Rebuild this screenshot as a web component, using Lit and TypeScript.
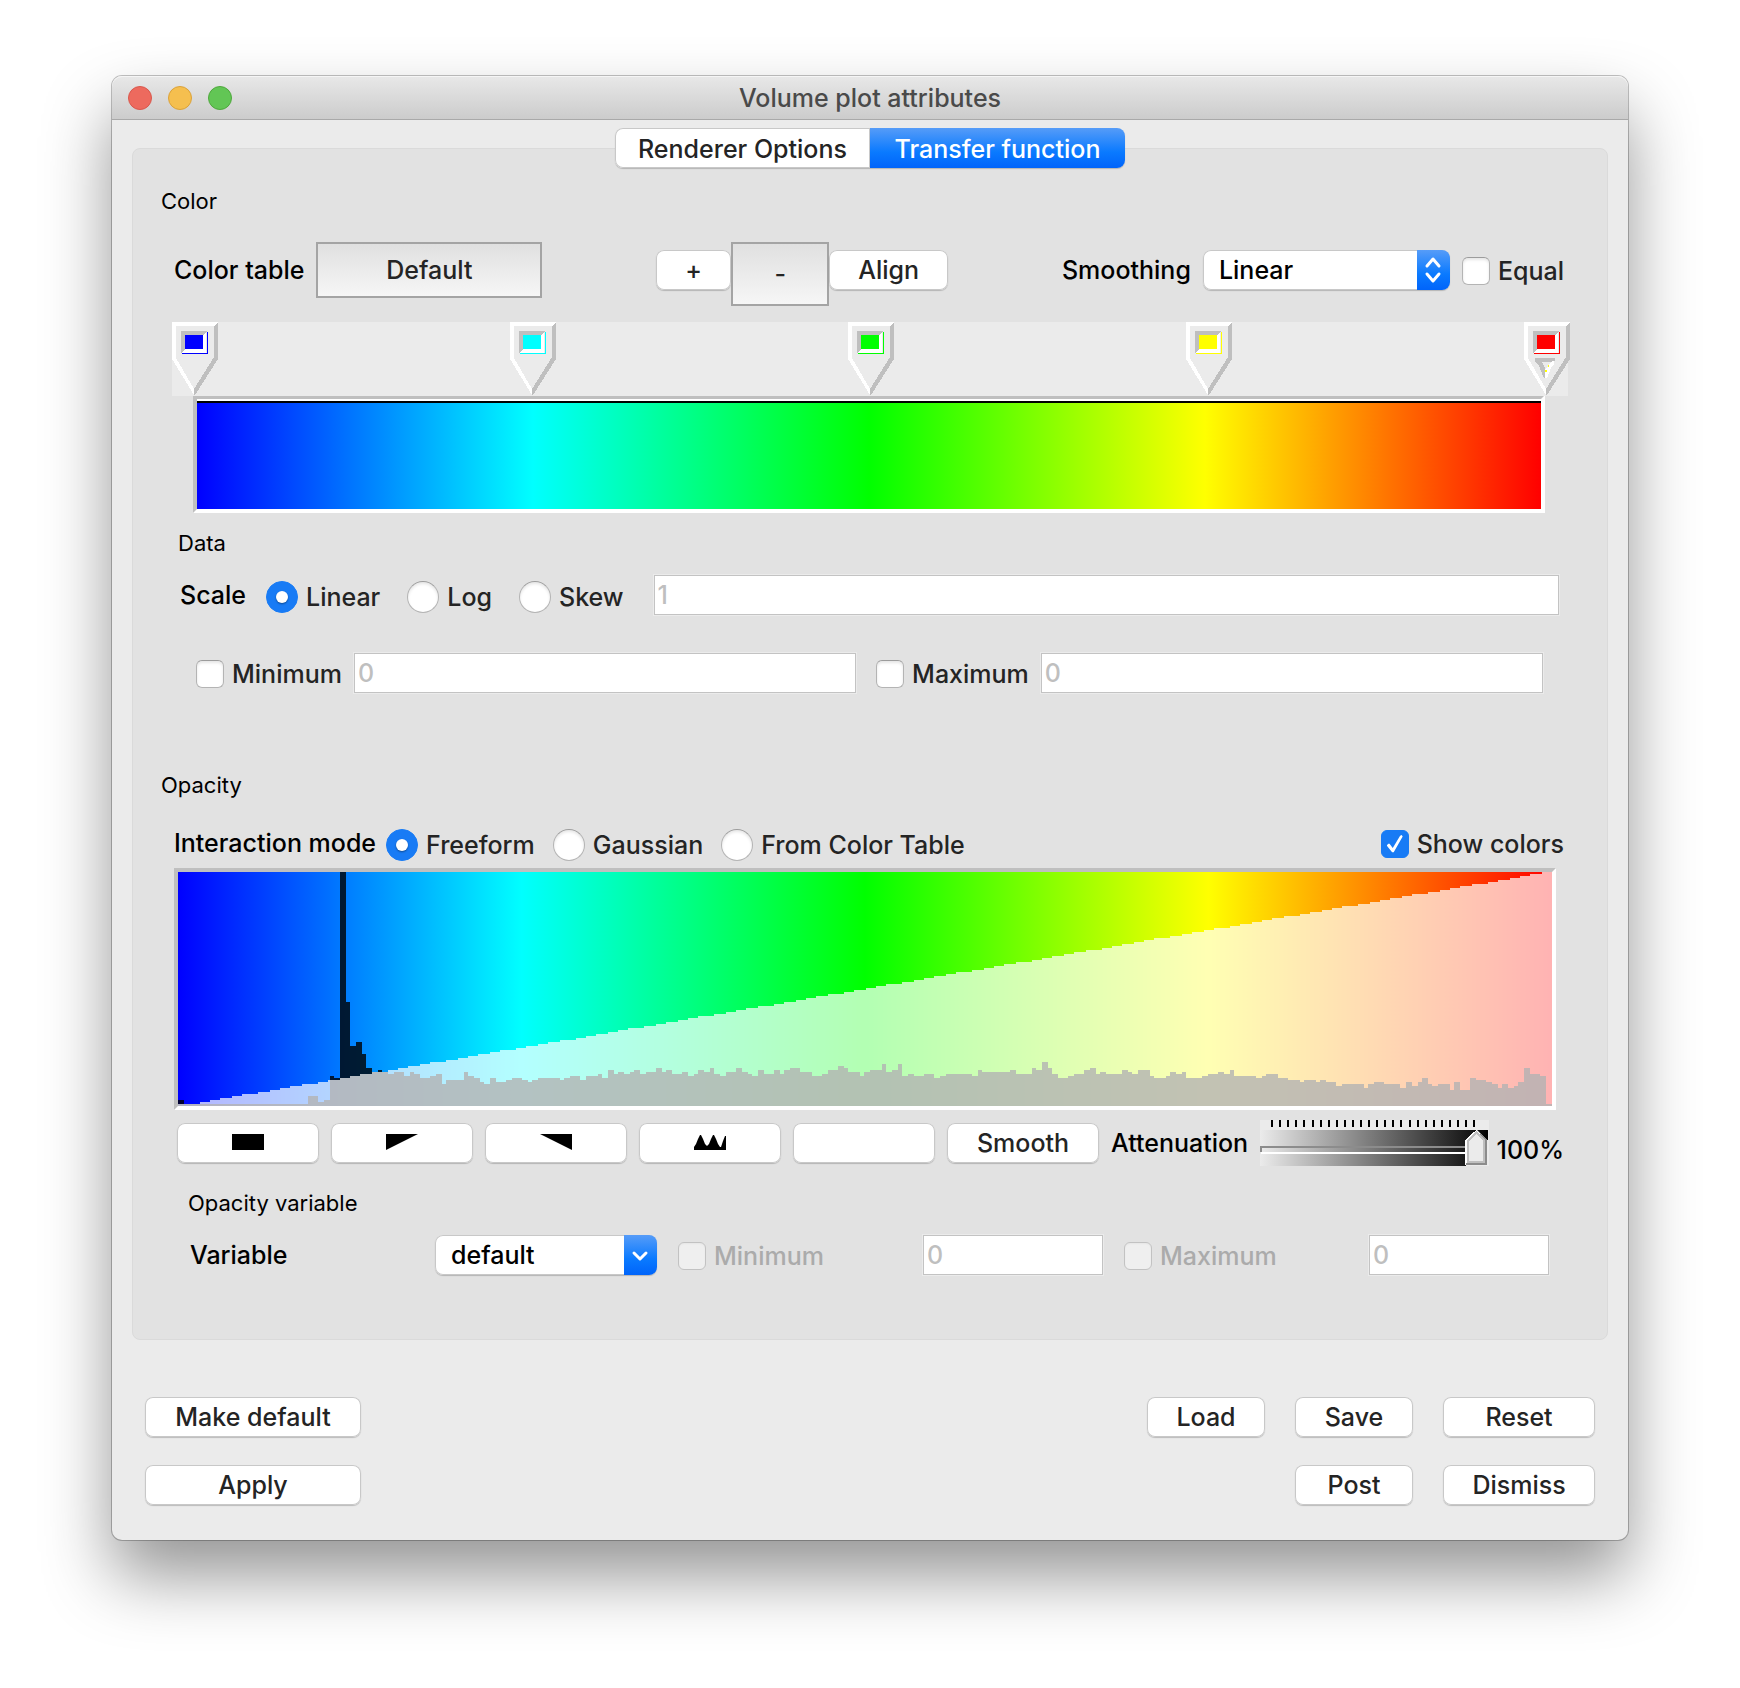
import { LitElement, html, svg, css, nothing } from 'lit';
import { customElement, property, state } from 'lit/decorators.js';
import { classMap } from 'lit/directives/class-map.js';
import { styleMap } from 'lit/directives/style-map.js';

interface ControlPoint {
  position: number;
  color: string;
}

const CONTROL_POINTS: ControlPoint[] = [
  { position: 0, color: '#0000ff' },
  { position: 25, color: '#00ffff' },
  { position: 50, color: '#00ff00' },
  { position: 75, color: '#ffff00' },
  { position: 100, color: '#ff0000' },
];

const PLOT_WIDTH = 687;
const PLOT_HEIGHT = 117;
const OPACITY_SAMPLES = 256;

// Histogram runs as [first column, height]; each run lasts until the next one.
const HISTOGRAM: [number, number][] = [
  [0, 3], [3, 1], [65, 5], [70, 2], [73, 3], [76, 15], [78, 14], [81, 117], [84, 52], [86, 30],
  [89, 32], [92, 26], [94, 19], [97, 17], [100, 18], [102, 17], [105, 16], [108, 17], [113, 15],
  [116, 17], [118, 16], [121, 14], [126, 15], [129, 16], [132, 11], [134, 13], [143, 17],
  [145, 15], [148, 14], [151, 12], [153, 11], [156, 14], [159, 12], [164, 13], [167, 14],
  [172, 13], [175, 12], [177, 13], [180, 14], [191, 13], [193, 14], [196, 15], [201, 13],
  [204, 15], [210, 16], [212, 14], [215, 18], [218, 16], [220, 17], [223, 16], [226, 17],
  [228, 18], [231, 16], [234, 17], [239, 19], [242, 17], [244, 18], [247, 16], [252, 17],
  [255, 15], [258, 16], [260, 18], [263, 17], [266, 19], [268, 16], [271, 15], [274, 17],
  [279, 19], [282, 17], [285, 16], [287, 15], [290, 18], [293, 16], [298, 18], [301, 16],
  [303, 18], [306, 19], [311, 17], [317, 15], [322, 16], [325, 18], [330, 20], [333, 19],
  [335, 17], [341, 15], [343, 17], [346, 18], [352, 21], [354, 17], [357, 18], [360, 21],
  [362, 15], [365, 16], [368, 15], [373, 16], [378, 14], [381, 15], [384, 16], [397, 15],
  [400, 18], [402, 17], [416, 18], [419, 16], [427, 19], [429, 18], [432, 22], [435, 19],
  [437, 16], [440, 14], [445, 15], [448, 16], [453, 18], [456, 19], [459, 16], [461, 17],
  [464, 16], [472, 18], [475, 17], [477, 16], [480, 18], [486, 15], [488, 14], [494, 15],
  [496, 17], [499, 16], [502, 17], [504, 14], [512, 15], [515, 16], [520, 17], [523, 16],
  [526, 18], [528, 15], [539, 14], [542, 15], [544, 16], [550, 14], [555, 13], [561, 12],
  [563, 13], [569, 12], [571, 13], [574, 12], [579, 10], [582, 11], [593, 9], [595, 11],
  [598, 12], [603, 11], [611, 9], [614, 12], [617, 10], [620, 12], [622, 14], [625, 11],
  [627, 10], [630, 11], [636, 8], [638, 12], [641, 8], [646, 14], [649, 13], [654, 12],
  [657, 11], [660, 9], [662, 11], [665, 9], [668, 10], [670, 12], [673, 19], [676, 16],
  [681, 15], [684, 1],
];

// Straight ramp from transparent to opaque, snapped to the plot's pixel grid.
const OPACITY_RAMP: [number, number][] = Array.from({ length: OPACITY_SAMPLES }, (_, i) => [
  Math.round((i * PLOT_WIDTH) / OPACITY_SAMPLES),
  Math.max(1, Math.round((i * PLOT_HEIGHT) / (OPACITY_SAMPLES - 1))),
]);

function stepPath(runs: [number, number][]): string {
  const steps = runs.map(([x, h]) => `H${x}V${PLOT_HEIGHT - h}`).join('');
  return `M0 ${PLOT_HEIGHT}${steps}H${PLOT_WIDTH}V${PLOT_HEIGHT}Z`;
}

const controlStyles = css`
  *,
  *::before,
  *::after {
    box-sizing: border-box;
  }
  button,
  input,
  select {
    margin: 0;
    font: inherit;
    color: inherit;
  }
  .push {
    height: 40px;
    padding: 0 12px;
    border: 0;
    border-radius: 8px;
    background: #fff;
    color: #242424;
    line-height: 32px;
    box-shadow: inset 0 0 0 1px #c8c8c8, 0 1px 1px rgba(0, 0, 0, 0.2);
  }
  .bevel {
    height: 56px;
    padding: 0;
    border: 2px solid #a4a4a4;
    background: linear-gradient(#e0e0e0, #f6f6f6);
    color: #242424;
  }
  .choice {
    display: inline-flex;
    align-items: center;
    gap: 8px;
    padding-top: 2px;
    color: #242424;
    white-space: nowrap;
  }
  .choice.disabled {
    color: #ababab;
  }
  .check,
  .radio {
    appearance: none;
    flex: none;
    display: grid;
    place-items: center;
    background: #fff;
    border: 1px solid #b4b4b4;
    border-top-color: #9c9c9c;
    box-shadow: inset 0 2px 3px rgba(0, 0, 0, 0.1);
  }
  .check {
    width: 28px;
    height: 28px;
    border-radius: 6px;
  }
  .radio {
    width: 32px;
    height: 32px;
    border-radius: 50%;
  }
  .radio:checked {
    border-color: #187bf5;
    background: #187bf5;
    box-shadow: none;
  }
  .radio:checked::before {
    content: '';
    width: 12px;
    height: 12px;
    border-radius: 50%;
    background: #fff;
    box-shadow: 0 1px 2px rgba(0, 0, 0, 0.4);
  }
  .check:checked {
    border-color: #187bf5;
    background: #187bf5;
    box-shadow: none;
  }
  .check:checked::before {
    content: '';
    width: 16px;
    height: 18px;
    background: #fff;
    clip-path: polygon(0 58%, 10% 48%, 18% 48%, 38% 72%, 84% 4%, 94% 0, 100% 9%, 44% 96%, 34% 96%);
  }
  .check:disabled {
    border-color: #c2c2c2;
    background: #efefef;
    box-shadow: inset 0 1px 2px rgba(0, 0, 0, 0.04);
  }
  .field {
    width: 180px;
    height: 40px;
    padding: 0 3px;
    border: 1px solid #c3c3c3;
    border-radius: 0;
    background: #fff;
    color: #bfbfbf;
    outline: 1px solid #ebebeb;
  }
`;

@customElement('vp-popup')
class VpPopup extends LitElement {
  @property() label = '';
  @property() value = '';
  @property({ type: Boolean }) combo = false;

  static styles = [
    controlStyles,
    css`
      :host {
        display: grid;
        grid-template: 40px / minmax(0, 1fr) auto;
      }
      .select {
        grid-area: 1 / 1 / 2 / 3;
        appearance: none;
        width: 100%;
        height: 40px;
        padding: 0 48px 0 16px;
        border: 0;
        border-radius: 8px;
        background: #fff;
        color: #000;
        box-shadow: inset 0 0 0 1px #c8c8c8, 0 1px 1px rgba(0, 0, 0, 0.2);
      }
      .arrow {
        grid-area: 1 / 2;
        width: 33px;
        height: 40px;
        border-radius: 0 8px 8px 0;
        background: linear-gradient(#569cf8, #0a7aff 60%, #0064fa);
        pointer-events: none;
      }
      path {
        fill: none;
        stroke: #fff;
        stroke-width: 3;
        stroke-linecap: round;
        stroke-linejoin: round;
      }
    `,
  ];

  render() {
    return html`
      <select class="select" aria-label=${this.label}>
        <option selected>${this.value}</option>
      </select>
      <svg class="arrow" viewBox="0 0 33 40" aria-hidden="true">
        ${this.combo
          ? svg`<path d="M10 18l6 6 6-6" />`
          : svg`<path d="M10 16l6-7 6 7M10 24l6 7 6-7" />`}
      </svg>
    `;
  }
}

@customElement('vp-color-spectrum')
class VpColorSpectrum extends LitElement {
  @property({ attribute: false }) points: ControlPoint[] = [];
  @property({ type: Number }) active = 0;

  static styles = css`
    :host {
      display: block;
    }
    .strip {
      position: relative;
      height: 74px;
      padding: 0 22px;
      background: #ebebeb;
    }
    .rail {
      position: relative;
      height: 100%;
    }
    /* pins hang over the rail, tip on their position */
    .pin {
      position: absolute;
      top: 0;
      width: 46px;
      height: 74px;
      margin-left: -22px;
    }
    .bar {
      margin: -1px 23px 0 21px;
      border: 4px solid;
      border-color: #bfbfbf #fff #fff #bfbfbf;
    }
    .edge {
      height: 4px;
      border-top: 2px solid #fff;
      background: #000;
      box-sizing: border-box;
    }
    .gradient {
      height: 106px;
    }
  `;

  private renderPin(point: ControlPoint, index: number) {
    return html`
      <svg
        class="pin"
        style=${styleMap({ left: `${point.position}%` })}
        viewBox="0 0 46 74"
        shape-rendering="crispEdges"
        aria-hidden="true"
      >
        <path fill="#ebebeb" d="M0 0h46v37L22 73 0 37z" />
        <path fill="#fff" d="M0 0h46l-4 4H4v32l18 31v6L0 37z" />
        <path fill="#bfbfbf" d="M46 1v36L23 73h-1v-6l20-32V4z" />
        <path fill="#bfbfbf" d="M9 9h26l-4 4H13v14l-4 4z" />
        <path fill="#fff" d="M34 10v21H10l3-4h18V13z" />
        <path fill=${point.color} d="M13 13h18v14H13zM35 10h1v22H10v-1h25z" />
        ${index === this.active
          ? svg`
              <path fill="#bfbfbf" d="M11 36h20v3l-2 1H18l3 6 1 3v7h-2l-3-7-2-5-4-5z" />
              <path fill="#fff" d="M30 39v3l-3 4-4 10h-2v-8l4-5 3-4z" />
              <path fill="#ffff00" d="M24 43h1v2h-1zM21 48h2v2h-2z" />
            `
          : nothing}
      </svg>
    `;
  }

  render() {
    const stops = this.points.map((p) => `${p.color} ${p.position}%`).join(', ');
    return html`
      <div class="strip">
        <div class="rail">${this.points.map((p, i) => this.renderPin(p, i))}</div>
      </div>
      <div class="bar">
        <div class="edge"></div>
        <div
          class="gradient"
          style=${styleMap({ backgroundImage: `linear-gradient(to right, ${stops})` })}
        ></div>
      </div>
    `;
  }
}

@customElement('vp-opacity-plot')
class VpOpacityPlot extends LitElement {
  @property({ attribute: false }) points: ControlPoint[] = [];

  static styles = css`
    :host {
      display: block;
      border: 4px solid;
      border-color: #bfbfbf #fff #fff #bfbfbf;
    }
    .plot {
      display: block;
      width: 100%;
      height: 234px;
    }
  `;

  render() {
    return html`
      <svg
        class="plot"
        viewBox="0 0 ${PLOT_WIDTH} ${PLOT_HEIGHT}"
        preserveAspectRatio="none"
        shape-rendering="crispEdges"
        role="img"
        aria-label="Opacity"
      >
        <defs>
          <linearGradient id="colors">
            ${this.points.map(
              (p) => svg`<stop offset="${p.position}%" stop-color=${p.color} />`,
            )}
          </linearGradient>
        </defs>
        <rect width=${PLOT_WIDTH} height=${PLOT_HEIGHT} fill="url(#colors)" />
        <path d=${stepPath(HISTOGRAM)} fill="#000" fill-opacity="0.8" />
        <path d=${stepPath(OPACITY_RAMP)} fill="#fff" fill-opacity="0.7" />
      </svg>
    `;
  }
}

@customElement('vp-attenuation')
class VpAttenuation extends LitElement {
  @property({ type: Number }) value = 100;

  static styles = css`
    :host {
      display: grid;
      height: 46px;
      background: #ebebeb;
    }
    .art,
    .range {
      grid-area: 1 / 1;
      display: block;
      width: 100%;
      height: 46px;
      margin: 0;
    }
    .range {
      appearance: none;
      background: transparent;
    }
    .range::-webkit-slider-thumb {
      appearance: none;
      width: 22px;
      height: 36px;
    }
  `;

  render() {
    const ticks = Array.from({ length: 26 }, (_, i) => 11 + i * 8);
    return html`
      <svg
        class="art"
        viewBox="0 0 226 46"
        preserveAspectRatio="none"
        shape-rendering="crispEdges"
        aria-hidden="true"
      >
        <defs>
          <linearGradient id="shade">
            <stop offset="0" stop-color="#ebebeb" />
            <stop offset="0.97" stop-color="#0a0a0a" />
            <stop offset="1" stop-color="#000" />
          </linearGradient>
        </defs>
        <rect y="10" width="226" height="36" fill="url(#shade)" />
        ${ticks.map((x) => svg`<rect x=${x} width="2" height="7" fill="#000" />`)}
        <path fill="#8c8c8c" d="M0 26h204v2H2v4H0z" />
        <path fill="#fff" d="M1 32h203v2H1z" />
        <path fill="#ebebeb" d="M204 20h22v26h-22z" />
        <path fill="#fff" d="M203 20l11-10 11 10v25h-22z" />
        <path fill="#8c8c8c" d="M214 9l11 11v25h-21v-2h19V21z" />
        <path fill="#bfbfbf" d="M205 20l9-9 9 9v23h-18z" />
        <path fill="#ebebeb" d="M207 21l7-7 7 7v20h-14z" />
      </svg>
      <input
        class="range"
        type="range"
        min="0"
        max="100"
        aria-label="Attenuation"
        .value=${String(this.value)}
      />
    `;
  }
}

@customElement('app-root')
class AppRoot extends LitElement {
  @state() private tab = 'transfer';

  static styles = [
    controlStyles,
    css`
      :host {
        display: block;
        min-height: 100vh;
        box-sizing: border-box;
        padding: 76px 112px 148px;
        background: #fff;
        color: #000;
        font-family: Inter, 'Liberation Sans', sans-serif;
        font-size: 25px;
        font-weight: 500;
        line-height: 32px;
      }
      .window {
        border-radius: 10px;
        background: #ebebeb;
        box-shadow: 0 0 0 1px rgba(0, 0, 0, 0.24), 0 36px 68px rgba(0, 0, 0, 0.42);
      }
      .titlebar {
        display: grid;
        grid-template-columns: 1fr auto 1fr;
        align-items: center;
        height: 44px;
        padding: 0 16px;
        border-bottom: 1px solid #a9a9a9;
        border-radius: 10px 10px 0 0;
        background: linear-gradient(#e8e8e8, #cccccc);
        box-shadow: inset 0 1px 0 #f5f5f5;
      }
      .lights {
        display: flex;
        gap: 16px;
      }
      .light {
        width: 24px;
        height: 24px;
        padding: 0;
        border: 1px solid #d9584d;
        border-radius: 50%;
        background: #ed6a5e;
      }
      .light.minimize {
        border-color: #dba23a;
        background: #f5bf4f;
      }
      .light.zoom {
        border-color: #4fa83d;
        background: #62c655;
      }
      .title {
        margin: 0;
        color: #4a4a4a;
        font-size: 25px;
        font-weight: 500;
      }
      .body {
        padding: 8px 20px 35px;
      }
      .tabs {
        position: relative;
        display: grid;
        grid-template-columns: 1fr 1fr;
        width: 510px;
        margin: 0 auto;
        border-radius: 8px;
        box-shadow: 0 1px 1px rgba(0, 0, 0, 0.2);
      }
      .tab {
        height: 40px;
        padding: 2px 0 0;
        border: 0;
        background: #fff;
        color: #242424;
        box-shadow: inset 0 0 0 1px #c8c8c8;
      }
      .tab:first-child {
        border-radius: 8px 0 0 8px;
      }
      .tab:last-child {
        border-radius: 0 8px 8px 0;
      }
      .tab.selected {
        background: linear-gradient(#569cf8, #0a7aff 60%, #0064fa);
        color: #fff;
        box-shadow: none;
      }
      .panel {
        margin-top: -20px;
        padding: 38px 28px 64px;
        border: 1px solid #dadada;
        border-radius: 8px;
        background: #e2e2e2;
      }
      .heading {
        margin: 0;
        font-size: 22px;
        font-weight: 400;
        line-height: 28px;
      }
      .group {
        padding: 0 11px;
      }
      .row {
        display: flex;
        align-items: center;
      }
      .cluster {
        display: flex;
        align-items: center;
        gap: 12px;
      }
      .color-row {
        justify-content: space-between;
        height: 56px;
        margin: 27px 0 24px;
        padding: 0 4px 0 2px;
      }
      .table-button {
        width: 226px;
      }
      .points {
        gap: 0;
      }
      .minus {
        width: 98px;
        height: 64px;
        margin-bottom: -8px;
      }
      .add {
        width: 75px;
      }
      .align {
        width: 119px;
      }
      .smoothing {
        width: 247px;
      }
      .data {
        margin: 16px 0 78px;
      }
      .data .heading {
        padding-left: 6px;
      }
      .scale {
        margin: 18px 0 38px;
        padding: 0 9px 0 8px;
      }
      .radios {
        display: flex;
        gap: 27px;
        margin: 0 30px 0 20px;
      }
      .grow {
        flex: 1;
        min-width: 0;
      }
      .limits {
        gap: 12px;
        padding: 0 25px 0 24px;
      }
      .limits .choice:nth-of-type(2) {
        margin-left: 8px;
      }
      .mode {
        height: 40px;
        margin: 24px 0 5px;
        padding: 0 4px 0 2px;
      }
      .mode .radios {
        flex: 1;
        gap: 18px;
        margin: 0 0 0 10px;
      }
      .mode .radios .choice,
      .scale .choice {
        padding-top: 4px;
      }
      .plot {
        margin: 0 12px 0 2px;
      }
      .shapes {
        gap: 12px;
        height: 46px;
        margin: 10px 0 23px;
        padding: 0 4px 0 5px;
      }
      .shape {
        display: grid;
        place-items: center;
        width: 142px;
        padding: 0 0 2px;
      }
      .smooth {
        width: 152px;
      }
      .percent {
        align-self: flex-end;
        margin-left: -4px;
      }
      .variable .heading {
        padding-left: 16px;
      }
      .variable-row {
        display: grid;
        grid-template-columns: 224fr 222fr 425fr 425fr;
        align-items: center;
        gap: 21px;
        margin-top: 18px;
        padding: 0 19px 0 18px;
      }
      .limit {
        display: flex;
        align-items: center;
        justify-content: space-between;
      }
      .footer {
        display: grid;
        grid-template-columns: 216px 1fr 118px 118px 152px;
        gap: 28px 30px;
        padding: 57px 13px 0;
      }
      .footer .push:nth-child(1),
      .footer .push:nth-child(5) {
        grid-column: 1;
      }
      .footer .push:nth-child(2) {
        grid-column: 3;
      }
      .footer .push:nth-child(6) {
        grid-column: 4;
      }
    `,
  ];

  private renderTab(id: string, label: string) {
    const selected = this.tab === id;
    return html`
      <button
        class=${classMap({ tab: true, selected })}
        role="tab"
        aria-selected=${selected}
        @click=${() => (this.tab = id)}
      >
        ${label}
      </button>
    `;
  }

  private renderRadio(name: string, label: string, checked = false) {
    return html`
      <label class="choice">
        <input class="radio" type="radio" name=${name} ?checked=${checked} />${label}
      </label>
    `;
  }

  private renderCheck(label: string, checked = false, disabled = false) {
    return html`
      <label class=${classMap({ choice: true, disabled })}>
        <input class="check" type="checkbox" ?checked=${checked} ?disabled=${disabled} />${label}
      </label>
    `;
  }

  private renderColor() {
    return html`
      <h2 class="heading">Color</h2>
      <div class="group">
        <div class="row color-row">
          <div class="cluster">
            <span id="table-label">Color table</span>
            <button class="bevel table-button" aria-describedby="table-label">Default</button>
          </div>
          <div class="cluster points">
            <button class="push add">+</button>
            <button class="bevel minus">-</button>
            <button class="push align">Align</button>
          </div>
          <div class="cluster">
            <span>Smoothing</span>
            <vp-popup class="smoothing" label="Smoothing" value="Linear"></vp-popup>
            ${this.renderCheck('Equal')}
          </div>
        </div>
        <vp-color-spectrum .points=${CONTROL_POINTS} active="4"></vp-color-spectrum>
        ${this.renderData()}
      </div>
    `;
  }

  private renderData() {
    return html`
      <div class="data">
        <h2 class="heading">Data</h2>
        <div class="row scale">
          <span>Scale</span>
          <div class="radios">
            ${this.renderRadio('scale', 'Linear', true)} ${this.renderRadio('scale', 'Log')}
            ${this.renderRadio('scale', 'Skew')}
          </div>
          <input class="field grow" type="text" aria-label="Skew factor" value="1" disabled />
        </div>
        <div class="row limits">
          ${this.renderCheck('Minimum')}
          <input class="field grow" type="text" aria-label="Minimum" value="0" disabled />
          ${this.renderCheck('Maximum')}
          <input class="field grow" type="text" aria-label="Maximum" value="0" disabled />
        </div>
      </div>
    `;
  }

  private renderShape(label: string, d: string) {
    return html`
      <button class="push shape" aria-label=${label}>
        ${d
          ? html`<svg width="32" height="16" viewBox="0 0 32 16"><path d=${d} /></svg>`
          : nothing}
      </button>
    `;
  }

  private renderOpacity() {
    return html`
      <h2 class="heading">Opacity</h2>
      <div class="group">
        <div class="row mode">
          <span>Interaction mode</span>
          <div class="radios">
            ${this.renderRadio('mode', 'Freeform', true)} ${this.renderRadio('mode', 'Gaussian')}
            ${this.renderRadio('mode', 'From Color Table')}
          </div>
          ${this.renderCheck('Show colors', true)}
        </div>
        <vp-opacity-plot class="plot" .points=${CONTROL_POINTS}></vp-opacity-plot>
        <div class="row shapes">
          ${this.renderShape('All ones', 'M0 0h32v16H0z')}
          ${this.renderShape('Ramp down', 'M0 0h32L0 16z')}
          ${this.renderShape('Ramp up', 'M0 0h32v16z')}
          ${this.renderShape(
            'Peaks',
            'M0 16v-3l2-3 2-5 2-4h1l2 4 2 5 2 2 2-2 2-5 2-4h1l2 4 2 5 2 3h1l2-6 2-5h1v15z',
          )}
          ${this.renderShape('All zeroes', '')}
          <button class="push smooth">Smooth</button>
          <span>Attenuation</span>
          <vp-attenuation class="grow" value="100"></vp-attenuation>
          <span class="percent">100%</span>
        </div>
        <div class="variable">
          <h2 class="heading">Opacity variable</h2>
          <div class="variable-row">
            <span>Variable</span>
            <vp-popup label="Variable" value="default" combo></vp-popup>
            <div class="limit">
              ${this.renderCheck('Minimum', false, true)}
              <input class="field" type="text" aria-label="Minimum" value="0" disabled />
            </div>
            <div class="limit">
              ${this.renderCheck('Maximum', false, true)}
              <input class="field" type="text" aria-label="Maximum" value="0" disabled />
            </div>
          </div>
        </div>
      </div>
    `;
  }

  render() {
    return html`
      <main class="window">
        <header class="titlebar">
          <div class="lights">
            <button class="light" aria-label="Close"></button>
            <button class="light minimize" aria-label="Minimize"></button>
            <button class="light zoom" aria-label="Zoom"></button>
          </div>
          <h1 class="title">Volume plot attributes</h1>
        </header>
        <div class="body">
          <div class="tabs" role="tablist">
            ${this.renderTab('renderer', 'Renderer Options')}
            ${this.renderTab('transfer', 'Transfer function')}
          </div>
          <div class="panel" role="tabpanel">${this.renderColor()} ${this.renderOpacity()}</div>
          <div class="footer">
            <button class="push">Make default</button>
            <button class="push">Load</button>
            <button class="push">Save</button>
            <button class="push">Reset</button>
            <button class="push">Apply</button>
            <button class="push">Post</button>
            <button class="push">Dismiss</button>
          </div>
        </div>
      </main>
    `;
  }
}

declare global {
  interface HTMLElementTagNameMap {
    'vp-popup': VpPopup;
    'vp-color-spectrum': VpColorSpectrum;
    'vp-opacity-plot': VpOpacityPlot;
    'vp-attenuation': VpAttenuation;
    'app-root': AppRoot;
  }
}
